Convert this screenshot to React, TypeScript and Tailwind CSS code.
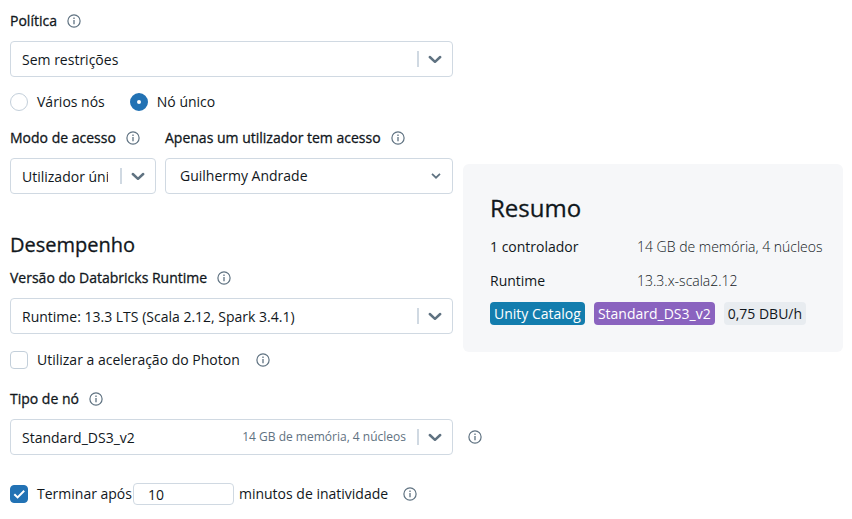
import { useState } from "react";
import type { ReactNode } from "react";

function InfoIcon({ label }: { label: string }) {
  return (
    <button type="button" aria-label={label} className="block shrink-0 text-[#5f7281]">
      <svg viewBox="0 0 14 14" className="size-[14px]" fill="none" stroke="currentColor">
        <circle cx="7" cy="7" r="6.1" strokeWidth="1.2" />
        <path d="M7 6v4.3" strokeWidth="1.3" />
        <path d="M7 3.6v1.3" strokeWidth="1.3" />
      </svg>
    </button>
  );
}

function FieldLabel({ htmlFor, children }: { htmlFor: string; children: string }) {
  return (
    <div className="mb-[10px] flex h-5 items-center gap-[10px]">
      <label htmlFor={htmlFor} className="whitespace-nowrap [-webkit-text-stroke:0.3px]">
        {children}
      </label>
      <InfoIcon label={`Informação: ${children}`} />
    </div>
  );
}

type SelectFieldProps = {
  id: string;
  value: string;
  hint?: string;
  plain?: boolean;
};

function SelectField({ id, value, hint, plain = false }: SelectFieldProps) {
  return (
    <div className="flex h-9 w-full min-w-0 items-center rounded border border-[#d0d9e2] bg-white">
      <select
        id={id}
        defaultValue={value}
        className={`h-full min-w-0 flex-1 appearance-none overflow-hidden bg-transparent outline-none ${plain ? "pl-[14px]" : "mr-3 pt-px pl-[11px]"}`}
      >
        <option>{value}</option>
      </select>
      {hint && <span className="mr-[11px] whitespace-nowrap text-[12px] text-[#5f7281]">{hint}</span>}
      {plain ? (
        <svg viewBox="0 0 10 6" className="mr-[11px] h-[6px] w-[10px] shrink-0" fill="none" stroke="#5f7281" strokeWidth="1.7">
          <path d="M1 .8 5 4.7 9 .8" />
        </svg>
      ) : (
        <>
          <span className="h-4 w-[2px] shrink-0 bg-[#d0d9e2]" />
          <svg
            viewBox="0 0 14 9"
            className="mr-[10px] ml-[9px] h-[9px] w-[14px] shrink-0"
            fill="none"
            stroke="#5f7281"
            strokeWidth="2.5"
            strokeLinecap="round"
            strokeLinejoin="round"
          >
            <path d="M1.8 2 7 6.8 12.2 2" />
          </svg>
        </>
      )}
    </div>
  );
}

function NodeRadio({ label, checked, onChange }: { label: string; checked: boolean; onChange: () => void }) {
  return (
    <label className="flex items-center gap-[9px]">
      <input
        type="radio"
        name="nodes"
        checked={checked}
        onChange={onChange}
        className="size-[18px] appearance-none rounded-full border border-[#c3cfda] bg-white checked:border-[7px] checked:border-[#2272b4]"
      />
      {label}
    </label>
  );
}

function Tick({ id, defaultChecked = false }: { id: string; defaultChecked?: boolean }) {
  return (
    <span className="grid size-[18px] shrink-0">
      <input
        id={id}
        type="checkbox"
        defaultChecked={defaultChecked}
        className="peer col-start-1 row-start-1 size-[18px] appearance-none rounded border border-[#c3cfda] bg-white checked:border-[#2272b4] checked:bg-[#2272b4]"
      />
      <svg
        viewBox="0 0 18 18"
        className="pointer-events-none invisible col-start-1 row-start-1 size-[18px] peer-checked:visible"
        fill="none"
        stroke="white"
        strokeWidth="2"
      >
        <path d="m4.3 9.2 3.3 3.2 6.6-6.6" />
      </svg>
    </span>
  );
}

function Badge({ className, children }: { className: string; children: ReactNode }) {
  return <span className={`h-[23px] whitespace-nowrap rounded px-1 leading-[23px] ${className}`}>{children}</span>;
}

export default function App() {
  const [single, setSingle] = useState(true);

  return (
    <main className="grid grid-cols-[443fr_380fr] items-start gap-[10px] bg-white pt-[11px] pr-[9px] pl-[10px] font-['Open_Sans','Noto_Sans',sans-serif] text-[14px] leading-5 text-[#11171c]">
      <form className="min-w-0">
        <FieldLabel htmlFor="policy">Política</FieldLabel>
        <SelectField id="policy" value="Sem restrições" />

        <div className="mt-[15px] flex h-5 gap-[25px]">
          <NodeRadio label="Vários nós" checked={!single} onChange={() => setSingle(false)} />
          <NodeRadio label="Nó único" checked={single} onChange={() => setSingle(true)} />
        </div>

        <div className="mt-4 grid grid-cols-[146fr_288fr] gap-[9px]">
          <div className="min-w-0">
            <FieldLabel htmlFor="access">Modo de acesso</FieldLabel>
            <SelectField id="access" value="Utilizador único" />
          </div>
          <div className="min-w-0">
            <FieldLabel htmlFor="user">Apenas um utilizador tem acesso</FieldLabel>
            <SelectField id="user" value="Guilhermy Andrade" plain />
          </div>
        </div>

        <h2 className="mt-[39px] mb-[11px] text-[20px] leading-6 [-webkit-text-stroke:0.3px]">Desempenho</h2>

        <FieldLabel htmlFor="runtime">Versão do Databricks Runtime</FieldLabel>
        <SelectField id="runtime" value="Runtime: 13.3 LTS (Scala 2.12, Spark 3.4.1)" />

        <div className="mt-4 mb-[19px] flex h-5 items-center gap-[9px]">
          <Tick id="photon" />
          <label htmlFor="photon" className="mr-[7px]">
            Utilizar a aceleração do Photon
          </label>
          <InfoIcon label="Informação: Photon" />
        </div>

        <FieldLabel htmlFor="node">Tipo de nó</FieldLabel>
        <div className="-mr-[29px] flex items-center gap-[15px]">
          <SelectField id="node" value="Standard_DS3_v2" hint="14 GB de memória, 4 núcleos" />
          <InfoIcon label="Informação: Standard_DS3_v2" />
        </div>

        <div className="mt-7 flex h-[22px] items-center">
          <Tick id="terminate" defaultChecked />
          <label htmlFor="terminate" className="mr-px ml-[9px] whitespace-nowrap">
            Terminar após
          </label>
          <input
            aria-label="Minutos de inatividade"
            defaultValue="10"
            className="h-[22px] w-[101px] rounded border border-[#d0d9e2] pl-[14px] outline-none"
          />
          <span className="mr-[15px] ml-[5px] whitespace-nowrap">minutos de inatividade</span>
          <InfoIcon label="Informação: inatividade" />
        </div>
      </form>

      <aside className="mt-[153px] min-w-0 rounded-md bg-[#f6f7f9] px-[27px] pt-7 pb-[27px]">
        <h2 className="text-[24px] leading-8 [-webkit-text-stroke:0.3px]">Resumo</h2>
        <dl className="mt-[13px] grid grid-cols-[147px_1fr] gap-y-[14px] whitespace-nowrap">
          <dt>1 controlador</dt>
          <dd className="font-light">14 GB de memória, 4 núcleos</dd>
          <dt>Runtime</dt>
          <dd className="font-light">13.3.x-scala2.12</dd>
        </dl>
        <div className="mt-[11px] flex gap-[9px]">
          <Badge className="bg-[#137dae] text-white">Unity Catalog</Badge>
          <Badge className="bg-[#8a63bf] text-white">Standard_DS3_v2</Badge>
          <Badge className="bg-[#e8ecf0]">0,75 DBU/h</Badge>
        </div>
      </aside>
    </main>
  );
}
